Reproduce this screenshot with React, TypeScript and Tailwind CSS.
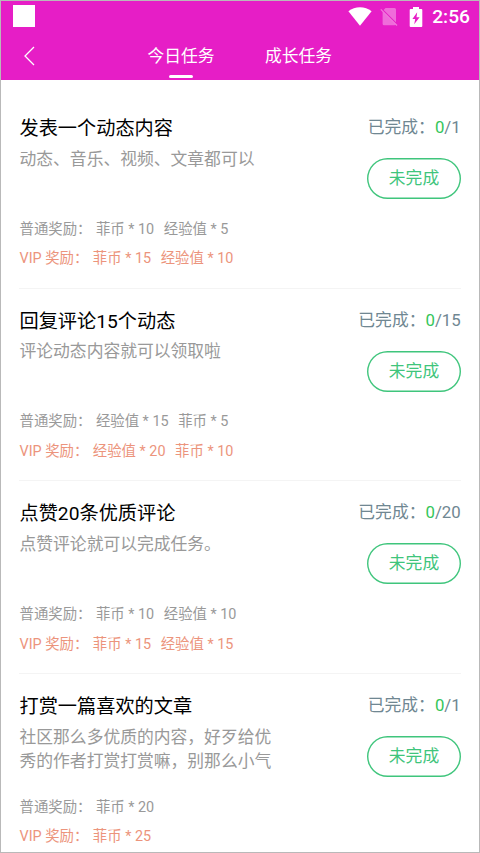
type Task = {
  title: string;
  desc: string;
  total: number;
  normal: string[];
  vip: string[];
};

const tasks: Task[] = [
  {
    title: "发表一个动态内容",
    desc: "动态、音乐、视频、文章都可以",
    total: 1,
    normal: ["菲币 * 10", "经验值 * 5"],
    vip: ["菲币 * 15", "经验值 * 10"],
  },
  {
    title: "回复评论15个动态",
    desc: "评论动态内容就可以领取啦",
    total: 15,
    normal: ["经验值 * 15", "菲币 * 5"],
    vip: ["经验值 * 20", "菲币 * 10"],
  },
  {
    title: "点赞20条优质评论",
    desc: "点赞评论就可以完成任务。",
    total: 20,
    normal: ["菲币 * 10", "经验值 * 10"],
    vip: ["菲币 * 15", "经验值 * 15"],
  },
  {
    title: "打赏一篇喜欢的文章",
    desc: "社区那么多优质的内容，好歹给优秀的作者打赏打赏嘛，别那么小气",
    total: 1,
    normal: ["菲币 * 20"],
    vip: ["菲币 * 25"],
  },
];

function StatusBar() {
  return (
    <div className="flex h-[31px] items-center justify-between pl-3 pr-[10px]">
      <div className="mb-0.5 size-[22px] bg-white" />
      <div className="flex items-center text-white">
        <svg className="mr-[8px] h-[19px] w-[24px]" viewBox="0 0 24 19" fill="currentColor">
          <path d="M0.4 4.2C7 -1.1 17 -1.1 23.6 4.2L12 18.8Z" />
        </svg>
        <svg className="mr-[11px] h-[20px] w-[18px]" viewBox="0 0 18 20">
          <path d="M5.5 1H14.5Q16 1 16 2.5V15.2L3.6 2.9ZM2.6 4.2L16 17.6Q15.5 18.2 14.5 18.2H4.1Q2.6 18.2 2.6 16.7Z" fill="#f07add" fillOpacity=".85" />
          <path d="M0.8 2.3L17 18.5" stroke="#f07add" strokeWidth="1.2" />
        </svg>
        <svg className="mr-[9px] h-[20px] w-[14px]" viewBox="0 0 14 20">
          <path d="M4 0H10V2H12.3Q13.3 2 13.3 3V19Q13.3 20 12.3 20H1.7Q0.7 20 0.7 19V3Q0.7 2 1.7 2H4Z" fill="currentColor" />
          <path d="M8.2 5.3L3.4 12H6.2L5.2 17.3L10.6 10.2H7.5Z" fill="#e61ec6" />
        </svg>
        <span className="-mr-px font-[Roboto] text-[19.2px] leading-6 font-medium">2:56</span>
      </div>
    </div>
  );
}

function Header() {
  return (
    <header className="h-[79px] shrink-0 bg-[#e61ec6] text-[16.8px] text-white">
      <StatusBar />
      <nav className="flex h-12 items-center">
        <svg className="ml-[22px] h-5 w-3" viewBox="0 0 12 20" fill="none" stroke="currentColor" strokeWidth="1.3">
          <path d="M11 1L2 10L11 19" />
        </svg>
        <div className="ml-[112px] flex h-full w-[68px] flex-col items-center">
          <span className="mt-3 leading-6">今日任务</span>
          <span className="mt-[7px] h-[3px] w-6 rounded-full bg-white" />
        </div>
        <div className="ml-[50px] h-full">
          <span className="mt-3 block leading-6">成长任务</span>
        </div>
      </nav>
    </header>
  );
}

function Rewards({ label, items }: { label: string; items: string[] }) {
  return (
    <div className="flex gap-[9.6px]">
      <span className="-mr-[5.2px]">{label}</span>
      {items.map((item) => (
        <span key={item}>{item}</span>
      ))}
    </div>
  );
}

function TaskItem({ task }: { task: Task }) {
  return (
    <section className="flex h-[192.7px] shrink-0 flex-col border-b border-[#f4f4f4] pt-[20px]">
      <div className="flex h-[98.7px] justify-between">
        <div className="w-[254px] pt-px pl-[0.5px]">
          <h2 className="text-[19.2px] leading-6 text-black">{task.title}</h2>
          <p className="mt-[5.6px] text-[16.8px] leading-6 text-[#999]">{task.desc}</p>
        </div>
        <div className="-mt-px flex flex-col items-end">
          <div className="pr-[0.3px] text-[16.8px] leading-6 text-[#708792]">
            已完成：<span className="text-[#35c65a]">0</span>/{task.total}
          </div>
          <button className="mt-[19px] h-[41px] w-[94px] rounded-full bg-white text-[16.8px] leading-none text-[#3fc57c] ring-[1.4px] ring-[#3fc57c] ring-inset">
            未完成
          </button>
        </div>
      </div>
      <div className="pl-[0.5px] text-[14.4px] leading-[29.6px] text-[#999]">
        <Rewards label="普通奖励：" items={task.normal} />
        <div className="text-[#ec947c]">
          <Rewards label="VIP 奖励：" items={task.vip} />
        </div>
      </div>
    </section>
  );
}

export default function App() {
  return (
    <div className="flex h-[853px] w-[480px] flex-col overflow-hidden border border-[#b9b9b9] bg-white font-[Roboto,'Noto_Sans_CJK_SC',sans-serif]">
      <Header />
      <main className="flex min-h-0 flex-1 flex-col overflow-hidden px-[18px] pt-4">
        {tasks.map((task) => (
          <TaskItem key={task.title} task={task} />
        ))}
      </main>
    </div>
  );
}
